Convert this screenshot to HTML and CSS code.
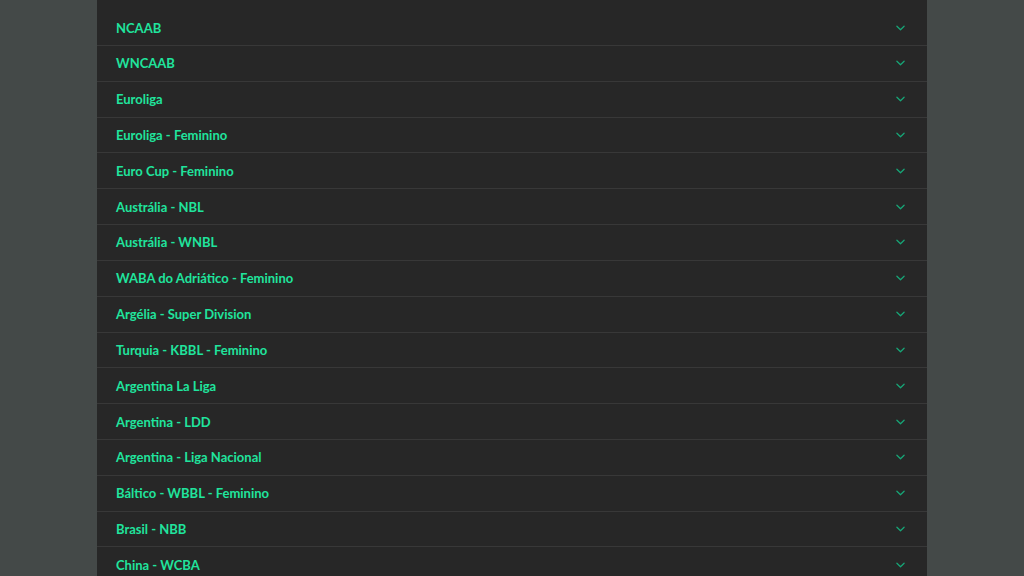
FILE: index.html
```html
<!DOCTYPE html>
<html lang="pt">
<head>
<meta charset="utf-8">
<title>Ligas</title>
<link rel="stylesheet" href="styles.css">
</head>
<body>
<div class="panel">
  <ul class="list">
    <li class="row"><span class="name">NCAAB</span><svg class="chev" viewBox="0 0 10 6"><path d="M1 1l4 4 4-4"/></svg></li>
    <li class="row"><span class="name">WNCAAB</span><svg class="chev" viewBox="0 0 10 6"><path d="M1 1l4 4 4-4"/></svg></li>
    <li class="row"><span class="name">Euroliga</span><svg class="chev" viewBox="0 0 10 6"><path d="M1 1l4 4 4-4"/></svg></li>
    <li class="row"><span class="name">Euroliga - Feminino</span><svg class="chev" viewBox="0 0 10 6"><path d="M1 1l4 4 4-4"/></svg></li>
    <li class="row"><span class="name">Euro Cup - Feminino</span><svg class="chev" viewBox="0 0 10 6"><path d="M1 1l4 4 4-4"/></svg></li>
    <li class="row"><span class="name">Austrália - NBL</span><svg class="chev" viewBox="0 0 10 6"><path d="M1 1l4 4 4-4"/></svg></li>
    <li class="row"><span class="name">Austrália - WNBL</span><svg class="chev" viewBox="0 0 10 6"><path d="M1 1l4 4 4-4"/></svg></li>
    <li class="row"><span class="name">WABA do Adriático - Feminino</span><svg class="chev" viewBox="0 0 10 6"><path d="M1 1l4 4 4-4"/></svg></li>
    <li class="row"><span class="name">Argélia - Super Division</span><svg class="chev" viewBox="0 0 10 6"><path d="M1 1l4 4 4-4"/></svg></li>
    <li class="row"><span class="name">Turquia - KBBL - Feminino</span><svg class="chev" viewBox="0 0 10 6"><path d="M1 1l4 4 4-4"/></svg></li>
    <li class="row"><span class="name">Argentina La Liga</span><svg class="chev" viewBox="0 0 10 6"><path d="M1 1l4 4 4-4"/></svg></li>
    <li class="row"><span class="name">Argentina - LDD</span><svg class="chev" viewBox="0 0 10 6"><path d="M1 1l4 4 4-4"/></svg></li>
    <li class="row"><span class="name">Argentina - Liga Nacional</span><svg class="chev" viewBox="0 0 10 6"><path d="M1 1l4 4 4-4"/></svg></li>
    <li class="row"><span class="name">Báltico - WBBL - Feminino</span><svg class="chev" viewBox="0 0 10 6"><path d="M1 1l4 4 4-4"/></svg></li>
    <li class="row"><span class="name">Brasil - NBB</span><svg class="chev" viewBox="0 0 10 6"><path d="M1 1l4 4 4-4"/></svg></li>
    <li class="row"><span class="name">China - WCBA</span><svg class="chev" viewBox="0 0 10 6"><path d="M1 1l4 4 4-4"/></svg></li>
  </ul>
</div>
</body>
</html>
```
FILE: styles.css
```css
html, body {
  margin: 0;
  padding: 0;
  height: 100%;
  overflow: hidden;
  background: #444948;
}
body {
  font-family: "Lato", "Liberation Sans", sans-serif;
}
.panel {
  width: 830px;
  margin: 0 auto;
  background: #272727;
  min-height: 100%;
}
.list {
  list-style: none;
  margin: 0;
  padding: 10.2px 0 0;
}
.row {
  display: flex;
  align-items: center;
  justify-content: space-between;
  height: 34.82px;
  padding: 0 22px 0 19px;
  border-bottom: 1px solid #383838;
}
.name {
  color: #20e49d;
  font-size: 13px;
  font-weight: 700;
}
.chev {
  width: 9px;
  height: 6px;
  fill: none;
  stroke: #17a677;
  stroke-width: 1.4;
  stroke-linecap: round;
  stroke-linejoin: round;
}
```
